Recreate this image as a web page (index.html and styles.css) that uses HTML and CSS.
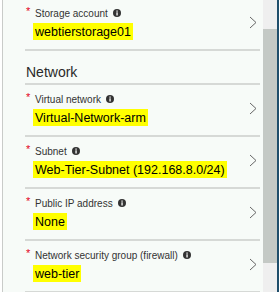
FILE: index.html
```html
<!DOCTYPE html>
<html lang="en">

<head>
    <meta charset="UTF-8">
    <meta name="viewport" content="width=device-width, initial-scale=1.0">
    <title>Settings</title>
    <link rel="stylesheet" href="styles.css">
</head>

<body>
    <div class="blade">
        <div class="blade-content">
            <div class="fields">
                <div class="field">
                    <div class="field-body">
                        <div class="field-label"><span class="req">*</span>Storage account<svg class="info" viewBox="0 0 8 8"><circle cx="4" cy="4" r="4"/><rect x="3.4" y="3.3" width="1.3" height="3.2" fill="#fff"/><rect x="3.4" y="1.5" width="1.3" height="1.2" fill="#fff"/></svg></div>
                        <div class="field-value"><span class="hl">webtierstorage01</span></div>
                    </div>
                    <svg class="chevron" viewBox="0 0 8 13"><path d="M1 1l6 5.5L1 12"/></svg>
                </div>

                <div class="section-title">Network</div>

                <div class="field">
                    <div class="field-body">
                        <div class="field-label"><span class="req">*</span>Virtual network<svg class="info" viewBox="0 0 8 8"><circle cx="4" cy="4" r="4"/><rect x="3.4" y="3.3" width="1.3" height="3.2" fill="#fff"/><rect x="3.4" y="1.5" width="1.3" height="1.2" fill="#fff"/></svg></div>
                        <div class="field-value"><span class="hl">Virtual-Network-arm</span></div>
                    </div>
                    <svg class="chevron" viewBox="0 0 8 13"><path d="M1 1l6 5.5L1 12"/></svg>
                </div>

                <div class="field">
                    <div class="field-body">
                        <div class="field-label"><span class="req">*</span>Subnet<svg class="info" viewBox="0 0 8 8"><circle cx="4" cy="4" r="4"/><rect x="3.4" y="3.3" width="1.3" height="3.2" fill="#fff"/><rect x="3.4" y="1.5" width="1.3" height="1.2" fill="#fff"/></svg></div>
                        <div class="field-value"><span class="hl">Web-Tier-Subnet (192.168.8.0/24)</span></div>
                    </div>
                    <svg class="chevron" viewBox="0 0 8 13"><path d="M1 1l6 5.5L1 12"/></svg>
                </div>

                <div class="field">
                    <div class="field-body">
                        <div class="field-label"><span class="req">*</span>Public IP address<svg class="info" viewBox="0 0 8 8"><circle cx="4" cy="4" r="4"/><rect x="3.4" y="3.3" width="1.3" height="3.2" fill="#fff"/><rect x="3.4" y="1.5" width="1.3" height="1.2" fill="#fff"/></svg></div>
                        <div class="field-value"><span class="hl">None</span></div>
                    </div>
                    <svg class="chevron" viewBox="0 0 8 13"><path d="M1 1l6 5.5L1 12"/></svg>
                </div>

                <div class="field">
                    <div class="field-body">
                        <div class="field-label"><span class="req">*</span>Network security group (firewall)<svg class="info" viewBox="0 0 8 8"><circle cx="4" cy="4" r="4"/><rect x="3.4" y="3.3" width="1.3" height="3.2" fill="#fff"/><rect x="3.4" y="1.5" width="1.3" height="1.2" fill="#fff"/></svg></div>
                        <div class="field-value"><span class="hl">web-tier</span></div>
                    </div>
                    <svg class="chevron" viewBox="0 0 8 13"><path d="M1 1l6 5.5L1 12"/></svg>
                </div>
            </div>
        </div>
        <div class="scrollbar">
            <div class="scroll-thumb"></div>
        </div>
        <div class="blade-edge"></div>
    </div>
</body>

</html>
```

FILE: styles.css
```css
body {
    margin: 0;
    padding: 0;
    background-color: #fff;
    font-family: 'Liberation Sans', Arial, sans-serif;
    overflow: hidden;
}

.blade {
    display: flex;
    height: 292px;
    padding-left: 2px;
    overflow: hidden;
}

.blade-content {
    flex: 1;
    background-color: #f7fbf8;
    border-left: 1px solid #c9cbc9;
    overflow: hidden;
}

/* list is scrolled a little */
.fields {
    margin-top: -1px;
    padding-left: 22px;
    padding-right: 3px;
}

.field {
    display: flex;
    align-items: center;
    height: 50px;
    border-bottom: 2px solid #d6d9d6;
}

.field-body {
    flex: 1;
    align-self: flex-start;
    padding-top: 6px;
    padding-left: 1px;
    white-space: nowrap;
}

.field-label {
    display: flex;
    align-items: center;
    font-size: 10px;
    color: #333;
    height: 16px;
}

.req {
    color: #e3001b;
    width: 9px;
    font-size: 11px;
    position: relative;
    top: -2px;
}

.info {
    width: 8px;
    height: 8px;
    margin-left: 5px;
    fill: #333;
}

.field-value {
    margin-top: 3px;
    padding-left: 9px;
    font-size: 12.5px;
    color: #000;
    line-height: 16px;
}

.hl {
    background-color: #ffff00;
    padding: 2px 2px 1px;
    margin-left: -2px;
}

.chevron {
    width: 8px;
    height: 13px;
    margin-right: 3px;
    margin-bottom: 4px;
    fill: none;
    stroke: #666;
    stroke-width: 1;
}

.section-title {
    height: 34px;
    border-bottom: 2px solid #d6d9d6;
    font-size: 14px;
    line-height: 16px;
    color: #2a2a2a;
    display: flex;
    align-items: flex-end;
    padding-left: 1px;
    padding-bottom: 3px;
    box-sizing: border-box;
}

.scrollbar {
    width: 14px;
    background-color: #efefef;
    padding-top: 29px;
}

.scroll-thumb {
    height: 234px;
    background-color: #c4c9c5;
}

.blade-edge {
    width: 2px;
    background-color: #1f4e6b;
}
```
